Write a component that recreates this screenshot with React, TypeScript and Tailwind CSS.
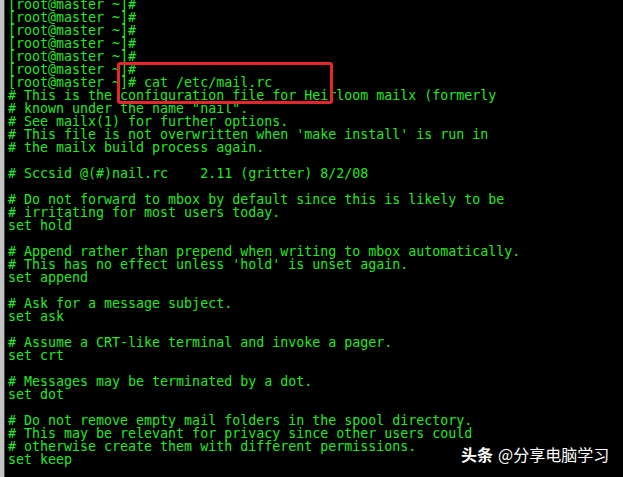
const lines = [
  "[root@master ~]#",
  "[root@master ~]#",
  "[root@master ~]#",
  "[root@master ~]#",
  "[root@master ~]#",
  "[root@master ~]#",
  "[root@master ~]# cat /etc/mail.rc",
  "# This is the configuration file for Heirloom mailx (formerly",
  '# known under the name "nail".',
  "# See mailx(1) for further options.",
  "# This file is not overwritten when 'make install' is run in",
  "# the mailx build process again.",
  "",
  "# Sccsid @(#)nail.rc    2.11 (gritter) 8/2/08",
  "",
  "# Do not forward to mbox by default since this is likely to be",
  "# irritating for most users today.",
  "set hold",
  "",
  "# Append rather than prepend when writing to mbox automatically.",
  "# This has no effect unless 'hold' is unset again.",
  "set append",
  "",
  "# Ask for a message subject.",
  "set ask",
  "",
  "# Assume a CRT-like terminal and invoke a pager.",
  "set crt",
  "",
  "# Messages may be terminated by a dot.",
  "set dot",
  "",
  "# Do not remove empty mail folders in the spool directory.",
  "# This may be relevant for privacy since other users could",
  "# otherwise create them with different permissions.",
  "set keep",
];

export default function App() {
  return (
    <div className="relative flex h-[477px] w-[623px] overflow-hidden bg-black">
      {/* window frame edge */}
      <div className="w-[4px] shrink-0 bg-[#c4c4c4]" />
      <div className="w-[1px] shrink-0 bg-[#4a4a4a]" />

      <pre className="mt-[-2px] pl-[3px] font-['DejaVu_Sans_Mono','Liberation_Mono',monospace] text-[13.3px] leading-[13px] text-[#26e626]">
        {lines.map((l, i) => (
          <div key={i} className="h-[13px] whitespace-pre">
            {l}
          </div>
        ))}
      </pre>

      {/* highlight box */}
      <div className="absolute left-[117px] top-[62px] h-[42px] w-[216px] rounded-[3px] border-[3px] border-[#e5262a]" />

      {/* watermark */}
      <div className="absolute left-[461px] top-[444px] flex items-center gap-[5px] font-['Noto_Sans_CJK_SC',sans-serif] text-[16px] leading-[21px] text-white [text-shadow:0_0_2px_rgba(0,0,0,0.9)]">
        <span className="font-bold">头条</span>
        <span>@分享电脑学习</span>
      </div>
    </div>
  );
}
